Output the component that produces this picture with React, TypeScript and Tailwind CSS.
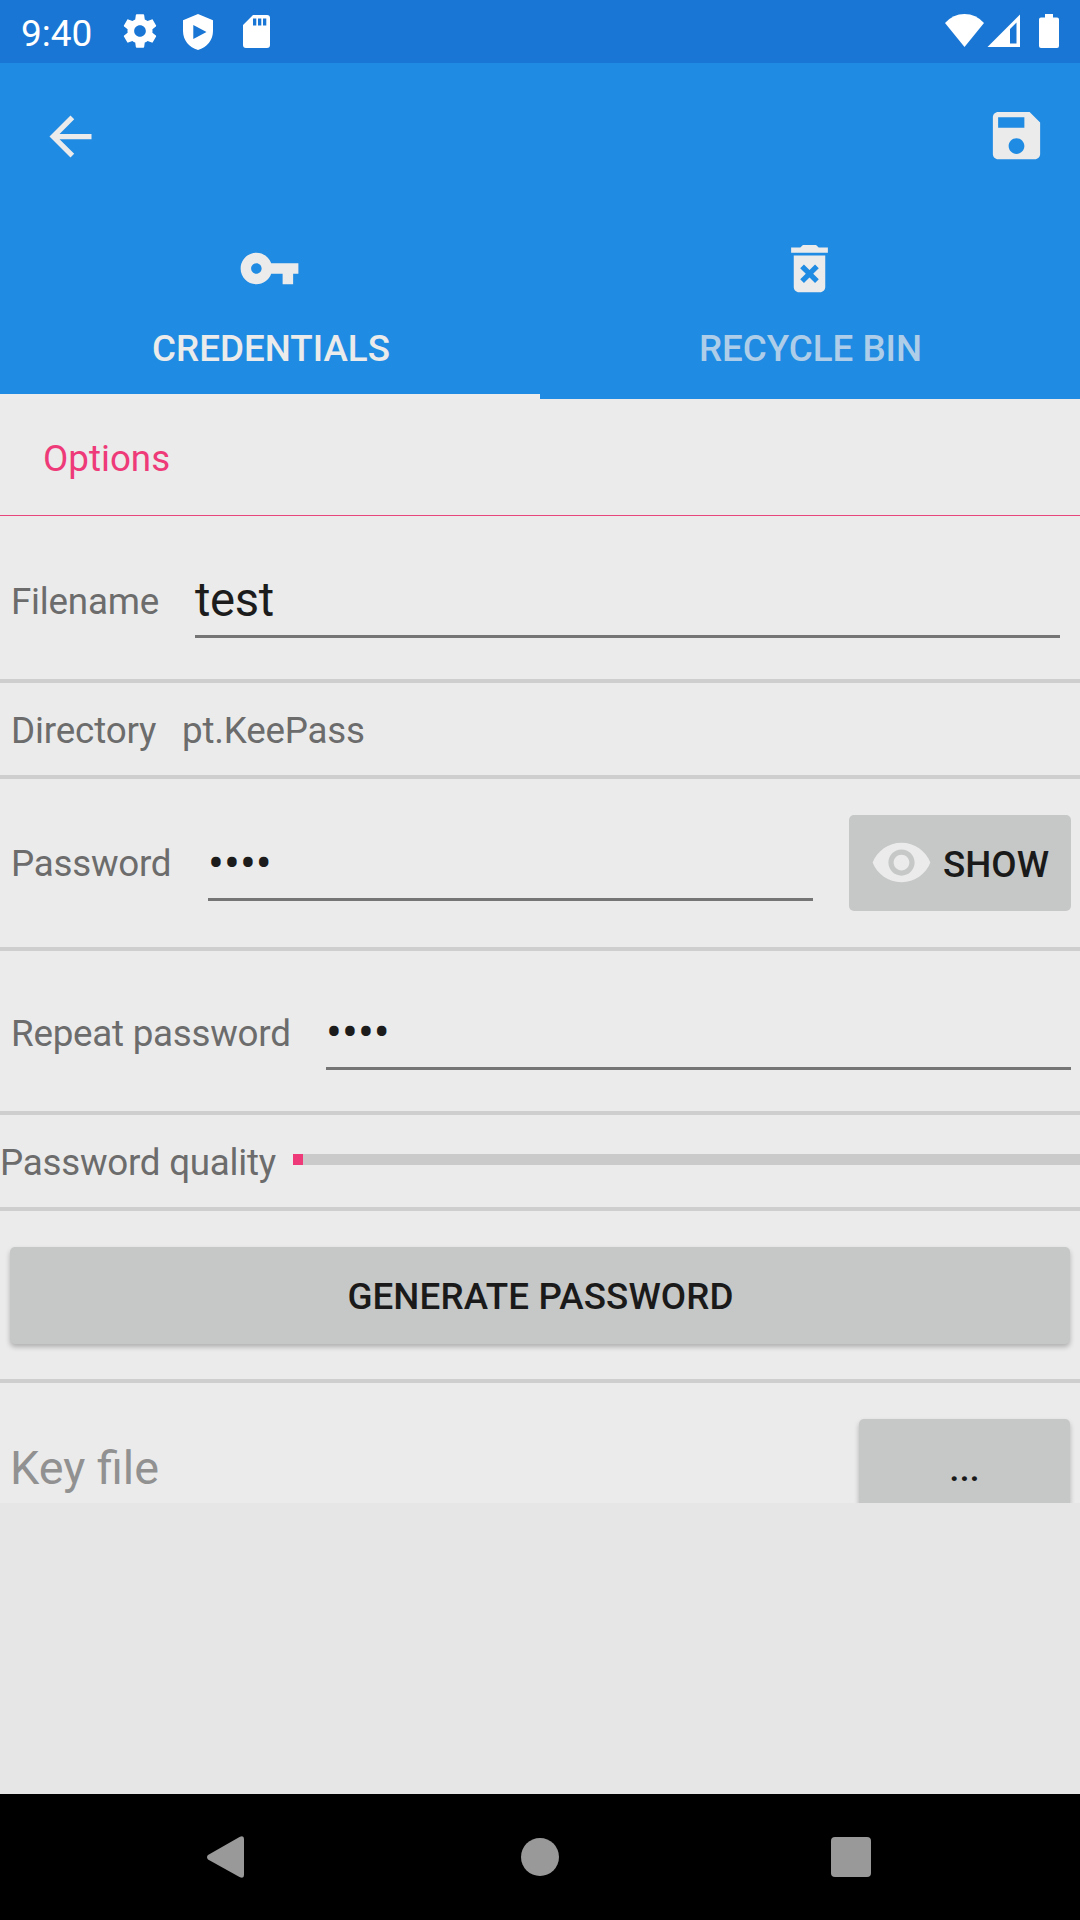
import type { ReactNode } from 'react';

const label = 'text-[36.75px] leading-[44px] whitespace-nowrap';

function Icon({ className, children }: { className?: string; children: ReactNode }) {
  return (
    <svg viewBox="0 0 24 24" fill="currentColor" className={'block size-[63px] shrink-0 ' + (className ?? '')}>
      {children}
    </svg>
  );
}

function StatusBar() {
  return (
    <div className="flex h-[63px] bg-[#1976d4] text-white">
      <span className="ml-[21px] mt-[12px] w-[97px] text-[37px] leading-[44px]">9:40</span>
      <svg viewBox="0 0 24 24" fill="currentColor" className="mt-[11px] ml-[2px] size-[40px]">
        <path d="M19.43 12.98c.04-.32.07-.64.07-.98s-.03-.66-.07-.98l2.11-1.65c.19-.15.24-.42.12-.64l-2-3.46c-.12-.22-.39-.3-.61-.22l-2.49 1c-.52-.4-1.08-.73-1.69-.98l-.38-2.65C14.46 2.18 14.25 2 14 2h-4c-.25 0-.46.18-.49.42l-.38 2.65c-.61.25-1.17.59-1.69.98l-2.49-1c-.23-.09-.49 0-.61.22l-2 3.46c-.13.22-.07.49.12.64l2.11 1.65c-.04.32-.07.65-.07.98s.03.66.07.98l-2.11 1.65c-.19.15-.24.42-.12.64l2 3.46c.12.22.39.3.61.22l2.49-1c.52.4 1.08.73 1.69.98l.38 2.65c.03.24.24.42.49.42h4c.25 0 .46-.18.49-.42l.38-2.65c.61-.25 1.17-.59 1.69-.98l2.49 1c.23.09.49 0 .61-.22l2-3.46c.12-.22.07-.49-.12-.64l-2.11-1.65zM12 15.5c-1.93 0-3.5-1.57-3.5-3.5s1.57-3.5 3.5-3.5 3.5 1.57 3.5 3.5-1.57 3.5-3.5 3.5z" />
      </svg>
      <svg viewBox="0 0 30 36" fill="currentColor" fillRule="evenodd" className="ml-[23px] mt-[14px] h-[36px] w-[30px]">
        <path d="M15 0L30 6.300V17C30 26 24 33.500 15 36C6 33.500 0 26 0 17V6.300ZM10.300 11V25L23.500 18Z" />
      </svg>
      <svg viewBox="0 0 27 33" fill="currentColor" fillRule="evenodd" className="ml-[30px] mt-[15px] h-[33px] w-[27px]">
        <path d="M10 0H24a3 3 0 0 1 3 3V30a3 3 0 0 1-3 3H3a3 3 0 0 1-3-3V10ZM10 3.500V10.500H13.300V3.500ZM15 3.500V10.500H18.300V3.500ZM20 3.500V10.500H23.300V3.500Z" />
      </svg>
      <div className="flex-1" />
      <svg viewBox="0 0 39 33" fill="currentColor" className="mt-[14px] h-[33px] w-[39px]">
        <path d="M0 9Q8 0 19.500 0T39 9L19.500 33Z" />
      </svg>
      <svg viewBox="0 0 33 33" fill="currentColor" fillRule="evenodd" className="ml-[3px] mt-[14px] h-[33px] w-[33px]">
        <path d="M33 0.500V33H0.500ZM29.500 8.500L23 15V29.500H29.500Z" />
      </svg>
      <svg viewBox="0 0 20 34" fill="currentColor" className="mr-[21px] ml-[19px] mt-[14px] h-[34px] w-[20px]">
        <path d="M6 0H14V3.500H18a2 2 0 0 1 2 2V32a2 2 0 0 1-2 2H2a2 2 0 0 1-2-2V5.500a2 2 0 0 1 2-2H6Z" />
      </svg>
    </div>
  );
}

function AppBar() {
  return (
    <header className="h-[336px] bg-[#208be2] text-[#ebebeb]">
      <div className="flex h-[147px] justify-between pt-[41px] pr-[32px] pl-[39px]">
        <Icon className="mt-[1px]">
          <path d="M20 11H7.830l5.590-5.590L12 4l-8 8 8 8 1.410-1.410L7.830 13H20v-2z" />
        </Icon>
        <Icon>
          <path d="M17 3H5c-1.110 0-2 .9-2 2v14c0 1.100.89 2 2 2h14c1.100 0 2-.9 2-2V7l-4-4zm-5 16c-1.660 0-3-1.340-3-3s1.340-3 3-3 3 1.340 3 3-1.340 3-3 3zm3-10H5V5h10v4z" />
        </Icon>
      </div>
      <div className="grid h-[189px] grid-cols-2">
        <div className="flex flex-col items-center border-b-[5px] border-[#ececec] pt-[27px]">
          <Icon className="mr-[1px]">
            <path d="M12.650 10C11.830 7.670 9.610 6 7 6c-3.310 0-6 2.690-6 6s2.690 6 6 6c2.610 0 4.830-1.670 5.650-4H17v4h4v-4h2v-4H12.650zM7 14c-1.100 0-2-.9-2-2s.9-2 2-2 2 .9 2 2-.9 2-2 2z" />
          </Icon>
          <span className="mt-[27px] pl-[2px] text-[36.75px] leading-[44px] font-medium">CREDENTIALS</span>
        </div>
        <div className="flex flex-col items-center pt-[27px]">
          <Icon className="mr-[1px]">
            <path d="M6 19c0 1.100.9 2 2 2h8c1.100 0 2-.9 2-2V7H6v12zm2.460-7.120l1.410-1.410L12 12.590l2.120-2.120 1.410 1.410L13.410 14l2.120 2.120-1.410 1.410L12 15.410l-2.120 2.120-1.410-1.410L10.590 14l-2.130-2.120zM15.500 4l-1-1h-5l-1 1H5v2h14V4z" />
          </Icon>
          <span className="mt-[27px] pl-[1px] text-[36.75px] leading-[44px] font-medium text-[#aecde8]">RECYCLE BIN</span>
        </div>
      </div>
    </header>
  );
}

function Field({ children, className }: { children: ReactNode; className: string }) {
  return (
    <div className={'border-b-[3px] border-[#757575] text-[47.25px] leading-[56px] text-[#1c1c1c] ' + className}>
      {children}
    </div>
  );
}

const raised = 'bg-[#c6c8c7] text-[#1a1a1a] rounded-[5px] font-medium text-[36.75px] leading-[44px]';

export default function App() {
  return (
    <div className="flex h-[1920px] w-[1080px] flex-col overflow-hidden bg-[#e6e6e6] font-[Roboto,sans-serif]">
      <StatusBar />
      <AppBar />
      <main className="h-[1104px] overflow-hidden bg-[#ebebeb] text-[#6c6c6c]">
        <div className="h-[117px] border-b border-[#e8457e] pt-[38px] pl-[43px]">
          <div className={label + ' text-[#ee3a78]'}>Options</div>
        </div>
        <div className="flex h-[167px] border-b-4 border-[#cecece] pl-[11px]">
          <div className={'mt-[64px] w-[184px] tracking-[-0.2px] ' + label}>Filename</div>
          <Field className="mt-[56px] h-[66px] w-[865px] tracking-[-0.35px]">test</Field>
        </div>
        <div className="flex h-[96px] border-b-4 border-[#cecece] pt-[26px] pl-[11px]">
          <div className={'w-[171px] tracking-[-0.15px] ' + label}>Directory</div>
          <div className={'tracking-[-0.2px] ' + label}>pt.KeePass</div>
        </div>
        <div className="flex h-[172px] border-b-4 border-[#cecece] pl-[11px]">
          <div className={'mt-[63px] w-[197px] tracking-[-0.25px] ' + label}>Password</div>
          <Field className="mt-[56px] h-[66px] w-[605px] pt-[1px]">••••</Field>
          <button className={'mt-[36px] ml-[36px] flex h-[96px] w-[222px] pl-[21px] ' + raised}>
            <Icon className="mt-[16px] text-[#ebebeb]">
              <path d="M12 4.500C7 4.500 2.730 7.610 1 12c1.730 4.390 6 7.500 11 7.500s9.270-3.110 11-7.500c-1.730-4.390-6-7.500-11-7.500zM12 17c-2.760 0-5-2.240-5-5s2.240-5 5-5 5 2.240 5 5-2.240 5-5 5zm0-8c-1.660 0-3 1.340-3 3s1.340 3 3 3 3-1.340 3-3-1.340-3-3-3z" />
            </Icon>
            <span className="mt-[28px] ml-[10px]">SHOW</span>
          </button>
        </div>
        <div className="flex h-[164px] border-b-4 border-[#cecece] pl-[11px]">
          <div className={'mt-[61px] w-[315px] tracking-[-0.25px] ' + label}>Repeat password</div>
          <Field className="mt-[53px] h-[66px] w-[745px] pt-[1px]">••••</Field>
        </div>
        <div className="flex h-[96px] border-b-4 border-[#cecece]">
          <div className={'mt-[26px] w-[293px] tracking-[-0.25px] ' + label}>Password quality</div>
          <div className="mt-[39px] h-[11px] flex-1 bg-[#cacaca]">
            <div className="h-full w-[10px] bg-[#ee3a78]" />
          </div>
        </div>
        <div className="h-[172px] border-b-4 border-[#cecece] px-[10px] pt-[36px]">
          <button className={'block h-[97px] w-full pt-[2px] pl-[1px] tracking-[0.1px] shadow-[0_3px_5px_rgba(0,0,0,0.25)] ' + raised}>GENERATE PASSWORD</button>
        </div>
        <div className="flex justify-between pr-[10px] pl-[10px]">
          <div className="mt-[57px] text-[46.75px] leading-[56px] text-[#919191]">Key file</div>
          <button className={'mt-[36px] h-[105px] w-[211px] pb-[6px] shadow-[0_3px_5px_rgba(0,0,0,0.25)] ' + raised}>...</button>
        </div>
      </main>
      <nav className="mt-auto flex h-[126px] items-center bg-black pl-[206px] text-[#999999]">
        <svg viewBox="0 0 39 44" fill="currentColor" className="h-[44px] w-[39px]">
          <path d="M2 20L33.500 2Q38 0 38 4V40Q38 44 33.500 42L2 24.500Q0 22.200 2 20Z" />
        </svg>
        <div className="ml-[276px] size-[38px] rounded-full bg-[#999999]" />
        <div className="ml-[272px] size-[40px] rounded-[4px] bg-[#999999]" />
      </nav>
    </div>
  );
}
